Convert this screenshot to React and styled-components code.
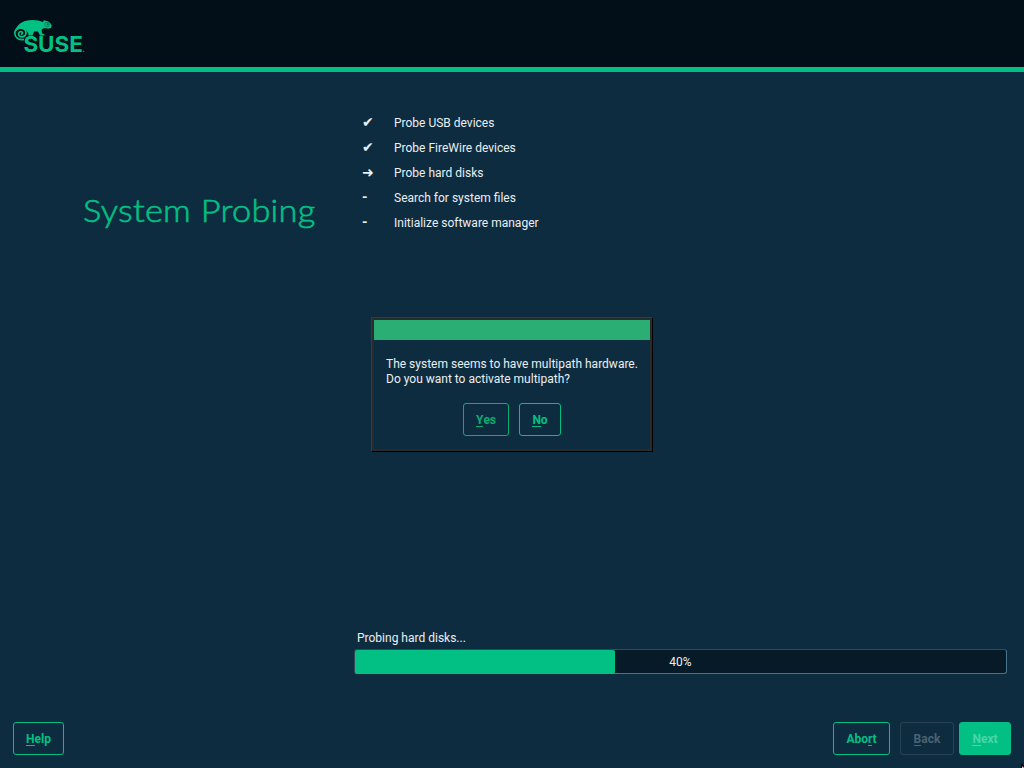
import React from 'react';
import styled, { createGlobalStyle, css } from 'styled-components';

const GlobalStyle = createGlobalStyle`
  * { box-sizing: border-box; }
  body {
    margin: 0;
    background: #0e2c40;
    color: #eaeff1;
    font: 12px/15px Roboto, sans-serif;
    overflow: hidden;
  }
`;

const Screen = styled.div`
  display: flex;
  flex-direction: column;
  width: 1024px;
  height: 768px;
  position: relative;
`;

const Header = styled.header`
  height: 72px;
  flex: none;
  padding: 18px 0 0 12px;
  background: #020e18;
  border-bottom: 5px solid #02c083;
`;

const Logo = styled.svg`
  display: block;
`;

const Main = styled.main`
  display: grid;
  grid-template-columns: 354px 653px;
  height: 650px;
  flex: none;
`;

const Title = styled.h1`
  margin: 118px 0 0 83px;
  font: 300 32px/40px Lato, sans-serif;
  letter-spacing: 0.25px;
  transform: scaleX(1.075);
  transform-origin: 0 0;
  -webkit-text-stroke: 0.6px #02c083;
  color: #02c083;
  white-space: nowrap;
`;

const Content = styled.section`
  display: flex;
  flex-direction: column;
  padding-top: 38px;
`;

const Steps = styled.ul`
  list-style: none;
  margin: 0;
  padding: 0 0 0 8px;
  flex: 1;
`;

const Step = styled.li`
  display: grid;
  grid-template-columns: 32px 1fr;
  height: 25px;
  padding-top: 2px;
  align-items: center;
`;

const Mark = styled.span`
  height: ${(p) => (p.$pending ? 18 : 17)}px;
  font: ${(p) => (p.$pending ? "bold 14px/15px Roboto" : "14px/15px 'DejaVu Sans'")}, sans-serif;
`;

const StatusLabel = styled.div`
  padding-left: 3px;
  margin-bottom: 3px;
`;

const Progress = styled.div`
  display: grid;
  height: 25px;
  margin-bottom: 48px;
  border: 1px solid #46748c;
  border-top-color: #31495a;
  border-left-color: #31495a;
  border-radius: 3px;
  background: #071a28;
`;

const ProgressFill = styled.div`
  grid-area: 1 / 1;
  background: #02c083;
  border-radius: 2px;
`;

const ProgressText = styled.div`
  grid-area: 1 / 1;
  text-align: center;
  line-height: 24px;
`;

const Footer = styled.footer`
  display: flex;
  padding: 0 13px;
`;

const Spacer = styled.div`
  flex: 1;
`;

const variants = {
  normal: css`color: #02c083; border-color: #02c083;`,
  focused: css`color: #0bad72; border-color: #0bad72;`,
  disabled: css`color: #4b6372; border-color: #2a4354;`,
  primary: css`color: #4bd5a8; border-color: #02c083; background: #02c083;`,
};

const Button = styled.button`
  width: ${(p) => p.$width}px;
  height: 33px;
  flex: none;
  margin: 0 0 0 ${(p) => p.$gap || 0}px;
  padding: 2px 0 0;
  border: 1px solid;
  border-radius: 3px;
  background: transparent;
  font: bold 12px/15px Roboto, sans-serif;
  ${(p) => variants[p.$variant || 'normal']}
`;

const Key = styled.span`
  display: inline-block;
  height: 15px;
  background: linear-gradient(currentColor, currentColor) 0 13px / 100% 1px no-repeat;
`;

const Dialog = styled.div`
  position: absolute;
  left: 371px;
  top: 317px;
  width: 282px;
  height: 135px;
  border: 1px solid #000;
  border-top-color: #3b3b3b;
  border-left-color: #3b3b3b;
`;

const DialogFrame = styled.div`
  height: 100%;
  border: 2px solid #2b2b2b;
  background: #0e2c40;
`;

const TitleBar = styled.div`
  height: 20px;
  background: #2aae74;
`;

const Message = styled.p`
  margin: 17px 0 16px 12px;
  white-space: nowrap;
`;

const DialogButtons = styled.div`
  display: flex;
  justify-content: center;
`;

const Pointer = styled.svg`
  position: absolute;
  right: 0;
  bottom: 0;
`;

const steps = [
  ['✔', 'Probe USB devices'],
  ['✔', 'Probe FireWire devices'],
  ['➜', 'Probe hard disks'],
  ['-', 'Search for system files'],
  ['-', 'Initialize software manager'],
];

function SuseLogo() {
  return (
    <Logo width="80" height="46" viewBox="12 18 80 46">
      <path
        fill="#02c083"
        d="M14.6 32 C15.5 27 20 22.5 25 21 C31 19.3 38 19.6 43 22 L43.6 20.4 C47 20.3 51.3 22.4 51.6 26 C51.5 28.3 50 28.7 47 28.4 C44 28.1 41.8 28.6 41.6 30 L42 33.6 L44.6 34.2 L44.2 35.4 L40 35.6 L38 31.6 L34 31.6 L32.4 35.4 L28.2 35.6 L28.6 33.8 L27 31.6 C25 29.5 22 28.5 18.6 29.3 Z"
      />
      <path
        fill="none"
        stroke="#02c083"
        strokeWidth="1.7"
        d="M24 39.4 C18 40.6 14.8 37 14.8 33 C15 29.3 18 27.5 21.5 28 C25.5 28.6 27 32.2 25.4 35 C23.8 37.6 19.5 37.5 18.6 34.4 C18.1 32 20.8 30.8 22.2 32.2 C23 33.3 22 34.4 20.9 34"
      />
      <circle cx="47" cy="24.6" r="2.3" fill="#02c083" stroke="#087050" strokeWidth=".8" />
      <circle cx="47.6" cy="24.4" r=".8" fill="#04523f" />
      <text
        x="23.4"
        y="52.4"
        fill="#02c083"
        fontFamily="Inter, sans-serif"
        fontWeight="700"
        fontSize="21.5"
        textLength="59.5"
        lengthAdjust="spacingAndGlyphs"
      >
        SUSE
      </text>
      <circle cx="83.6" cy="51.5" r=".8" fill="#068f66" />
    </Logo>
  );
}

export default function App() {
  return (
    <>
      <GlobalStyle />
      <Screen>
        <Header><SuseLogo /></Header>
        <Main>
          <Title>System Probing</Title>
          <Content>
            <Steps>
              {steps.map(([mark, label]) => (
                <Step key={label}><Mark $pending={mark === '-'}>{mark}</Mark><span>{label}</span></Step>
              ))}
            </Steps>
            <StatusLabel>Probing hard disks...</StatusLabel>
            <Progress>
              <ProgressFill style={{ width: '40%' }} />
              <ProgressText>40%</ProgressText>
            </Progress>
          </Content>
        </Main>
        <Footer>
          <Button $width={51}><Key>H</Key>elp</Button>
          <Spacer />
          <Button $width={57}>Abo<Key>r</Key>t</Button>
          <Button $width={54} $gap={10} $variant="disabled"><Key>B</Key>ack</Button>
          <Button $width={52} $gap={5} $variant="primary"><Key>N</Key>ext</Button>
        </Footer>
        <Dialog>
          <DialogFrame>
            <TitleBar />
            <Message>The system seems to have multipath hardware.<br />Do you want to activate multipath?</Message>
            <DialogButtons>
              <Button $width={46} $variant="focused"><Key>Y</Key>es</Button>
              <Button $width={42} $gap={10}><Key>N</Key>o</Button>
            </DialogButtons>
          </DialogFrame>
        </Dialog>
        <Pointer width="3" height="5" viewBox="0 0 3 5">
          <path d="M0 0 L3 3 L3 5 L0 5 Z" fill="#000" />
          <path d="M1.2 3 L3 5 L1.2 5 Z" fill="#fff" />
        </Pointer>
      </Screen>
    </>
  );
}
